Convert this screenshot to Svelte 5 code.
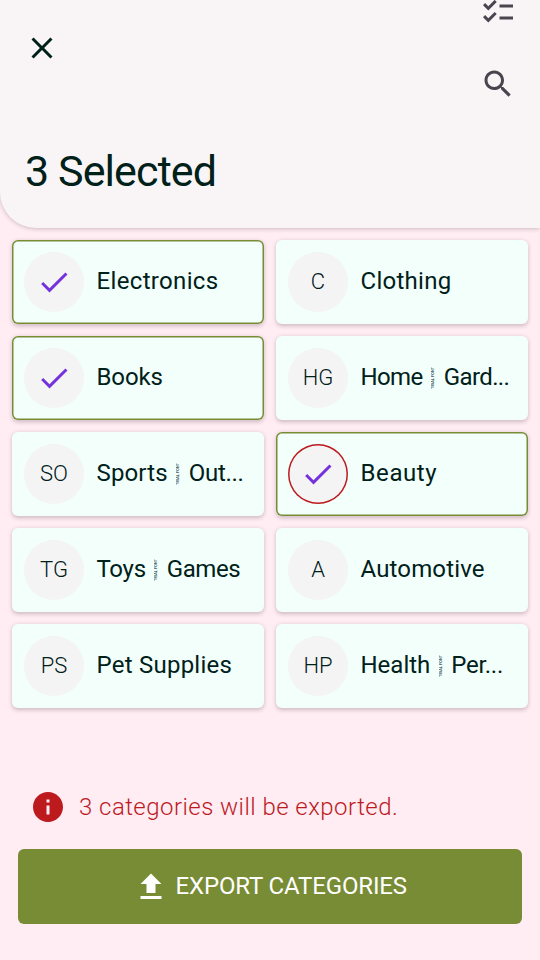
<script>
  const categories = [
    { name: 'Electronics', initials: 'E', selected: true, spacing: 0.34 },
    { name: 'Clothing', initials: 'C', spacing: 0.28 },
    { name: 'Books', initials: 'B', selected: true, spacing: -0.1 },
    { name: 'Home', rest: 'Gard...', initials: 'HG', spacing: -0.6, restSpacing: -0.6 },
    { name: 'Sports', rest: 'Out...', initials: 'SO', spacing: 0.15, restSpacing: -0.3 },
    { name: 'Beauty', initials: 'B', selected: true, focused: true, spacing: 0.6 },
    { name: 'Toys', rest: 'Games', initials: 'TG', spacing: -0.3, restSpacing: -0.4 },
    { name: 'Automotive', initials: 'A', spacing: 0.15 },
    { name: 'Pet Supplies', initials: 'PS', spacing: 0.24 },
    { name: 'Health', rest: 'Per...', initials: 'HP', spacing: 0, restSpacing: -0.3 }
  ];
</script>

{#snippet icon(path)}
  <svg class="icon" viewBox="0 0 24 24" aria-hidden="true"><path d={path} /></svg>
{/snippet}

<main>
  <header>
    <div class="bar">
      <button class="close" aria-label="Close">
        {@render icon('M19 6.41L17.59 5 12 10.59 6.41 5 5 6.41 10.59 12 5 17.59 6.41 19 12 13.41 17.59 19 19 17.59 13.41 12z')}
      </button>
      <div class="actions">
        <button aria-label="Select all">
          {@render icon('M22 7h-9v2h9V7zm0 8h-9v2h9v-2zM5.54 11L2 7.46l1.41-1.41 2.12 2.12 4.24-4.24 1.41 1.41L5.54 11zm0 8L2 15.46l1.41-1.41 2.12 2.12 4.24-4.24 1.41 1.41L5.54 19z')}
        </button>
        <button aria-label="Search">
          {@render icon('M15.5 14h-.79l-.28-.27C15.41 12.59 16 11.11 16 9.5 16 5.91 13.09 3 9.5 3S3 5.91 3 9.5 5.91 16 9.5 16c1.61 0 3.09-.59 4.23-1.57l.27.28v.79l5 4.99L20.49 19l-4.99-5zm-6 0C7.01 14 5 11.99 5 9.5S7.01 5 9.5 5 14 7.01 14 9.5 11.99 14 9.5 14z')}
        </button>
      </div>
    </div>
    <h1>3 Selected</h1>
  </header>

  <section class="grid">
    {#each categories as c}
      <div class="card" class:selected={c.selected}>
        <div class="avatar" class:focused={c.focused}>
          {#if c.selected}
            {@render icon('M9 16.17L4.83 12l-1.42 1.41L9 19 21 7l-1.41-1.41z')}
          {:else}
            <span>{c.initials}</span>
          {/if}
        </div>
        <div class="label">
          <span style="letter-spacing: {c.spacing}px">{c.name}</span>
          {#if c.rest}
            <span class="trial">TRIAL FONT</span>
            <span style="letter-spacing: {c.restSpacing}px">{c.rest}</span>
          {/if}
        </div>
      </div>
    {/each}
  </section>

  <footer>
    <p>
      {@render icon('M12 2C6.48 2 2 6.48 2 12s4.48 10 10 10 10-4.48 10-10S17.52 2 12 2zm1 15h-2v-6h2v6zm0-8h-2V7h2v2z')}
      <span>3 categories will be exported.</span>
    </p>
    <button class="export">
      {@render icon('M5 20h14v-2H5v2zm0-10h4v6h6v-6h4l-7-7-7 7z')}
      <span>EXPORT CATEGORIES</span>
    </button>
  </footer>
</main>

<style>
  :global(body) {
    margin: 0;
    background: #ffedf3;
  }
  main {
    width: 540px;
    height: 960px;
    overflow: hidden;
    display: flex;
    flex-direction: column;
    background: #ffedf3;
    color: #00201a;
    font-family: Roboto, "Liberation Sans", sans-serif;
  }
  .icon {
    display: block;
    flex: none;
    width: 36px;
    height: 36px;
    fill: currentColor;
  }
  button {
    border: 0;
    padding: 0;
    background: none;
    color: inherit;
    font: inherit;
  }
  header {
    box-sizing: border-box;
    flex: none;
    height: 228px;
    background: #f9f5f7;
    border-bottom-left-radius: 36px;
    box-shadow: 0 1px 4px rgba(60, 20, 40, 0.24);
  }
  .bar {
    display: flex;
    justify-content: space-between;
    height: 142px;
    padding: 0 24px;
  }
  .close {
    height: 96px;
  }
  .actions {
    display: flex;
    flex-direction: column;
    color: #49454f;
    margin-top: -24px;
  }
  .actions button {
    height: 72px;
  }
  h1 {
    margin: 0;
    padding-left: 25px;
    font-size: 43px;
    font-weight: 400;
    line-height: 58px;
    letter-spacing: -0.9px;
    white-space: nowrap;
  }
  .grid {
    display: grid;
    grid-template-columns: 252px 252px;
    grid-auto-rows: 84px;
    gap: 12px;
    padding: 12px;
  }
  .card {
    box-sizing: border-box;
    display: flex;
    align-items: center;
    gap: 12.5px;
    padding-left: 12px;
    border-radius: 6px;
    background: #f2fffb;
    box-shadow: 0 1.5px 4px rgba(60, 20, 40, 0.24);
  }
  .selected {
    box-shadow: inset 0 0 0 1.5px #788c35, 0 1.5px 4px rgba(60, 20, 40, 0.24);
  }
  .avatar {
    flex: none;
    display: flex;
    align-items: center;
    justify-content: center;
    width: 60px;
    height: 60px;
    border-radius: 50%;
    background: #f5f4f5;
    font-size: 22px;
    font-weight: 300;
  }
  .avatar span {
    padding-bottom: 2px;
  }
  .avatar .icon {
    color: #7532dc;
  }
  .focused {
    box-shadow: inset 0 0 0 1.5px #bd1a1e;
  }
  .label {
    display: flex;
    align-items: center;
    height: 30px;
    padding-bottom: 2px;
    font-size: 24px;
    line-height: 30px;
    white-space: nowrap;
  }
  .trial {
    writing-mode: vertical-rl;
    transform: rotate(180deg);
    width: 4px;
    margin: 2px 8.5px 0;
    font-size: 3.7px;
    font-weight: 500;
    line-height: 4px;
    letter-spacing: 0.15px;
  }
  footer {
    margin-top: auto;
    padding: 0 18px 36px;
  }
  footer p {
    display: flex;
    align-items: center;
    gap: 13px;
    margin: 0 0 24px;
    padding-left: 12px;
    color: #bd1a1e;
    font-size: 24px;
    font-weight: 300;
    letter-spacing: 0.45px;
    white-space: nowrap;
  }
  .export {
    display: flex;
    align-items: center;
    justify-content: center;
    gap: 6.5px;
    width: 504px;
    height: 75px;
    border-radius: 6px;
    background: #788c35;
    color: #fff;
    font-size: 24px;
    letter-spacing: -0.14px;
    white-space: nowrap;
  }
  .export span {
    padding-bottom: 2px;
  }
</style>
